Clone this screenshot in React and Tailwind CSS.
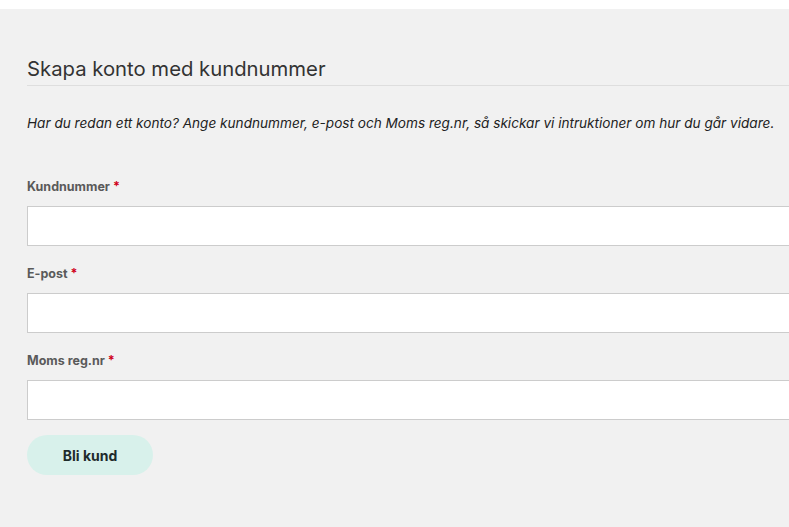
import React from 'react';

const Field = ({ label }) => (
  <div className="flex flex-col">
    <label className="text-[12.5px] font-bold text-[#5a5a5a] leading-[16px]">
      {label}
      <span className="text-[#d0021b] ml-[3px]">*</span>
    </label>
    <input
      type="text"
      className="mt-[11px] h-[40px] w-[820px] bg-white border border-[#cccccc] outline-none"
    />
  </div>
);

export default function App() {
  return (
    <div className="w-[789px] h-[527px] overflow-hidden bg-white" style={{ fontFamily: 'Inter, "Noto Sans", sans-serif' }}>
      <div className="h-[9px] bg-white" />
      <div className="h-[518px] bg-[#f1f1f1] pl-[27px] pt-[46px]">
        <h2 className="text-[20.3px] leading-[28px] text-[#333333] pb-[2px] border-b border-[#dedede]">
          Skapa konto med kundnummer
        </h2>
        <p className="mt-[27px] text-[13.6px] italic leading-[20px] text-[#222222]">
          Har du redan ett konto? Ange kundnummer, e-post och Moms reg.nr, så skickar vi intruktioner om hur du går vidare.
        </p>
        <div className="mt-[46px] flex flex-col gap-[20px]">
          <Field label="Kundnummer" />
          <Field label="E-post" />
          <Field label="Moms reg.nr" />
        </div>
        <button className="mt-[15px] h-[40px] w-[126px] rounded-full bg-[#d8f1eb] text-[14px] font-bold text-[#1e2b2b]">
          Bli kund
        </button>
      </div>
    </div>
  );
}
